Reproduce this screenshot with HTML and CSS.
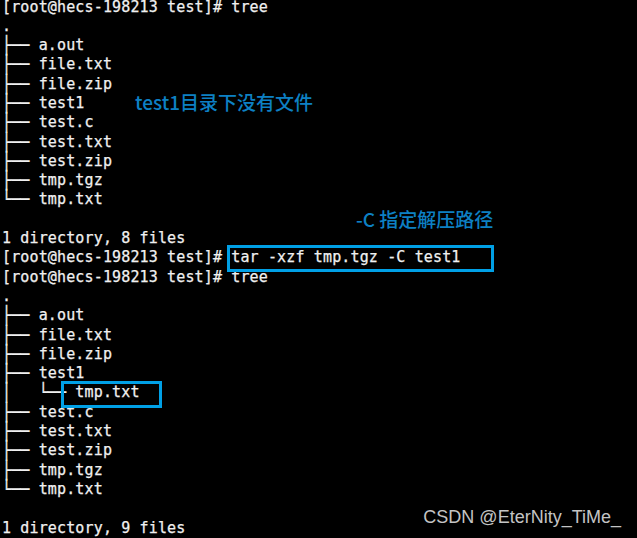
FILE: index.html
```html
<!DOCTYPE html>
<html lang="zh">
<head>
<meta charset="utf-8">
<link rel="stylesheet" href="styles.css">
</head>
<body>
<div class="screen">
<pre class="term">[root@hecs-198213 test]# tree
.
<span class="tr">├──</span> a.out
<span class="tr">├──</span> file.txt
<span class="tr">├──</span> file.zip
<span class="tr">├──</span> test1
<span class="tr">├──</span> test.c
<span class="tr">├──</span> test.txt
<span class="tr">├──</span> test.zip
<span class="tr">├──</span> tmp.tgz
<span class="tr">└──</span> tmp.txt

1 directory, 8 files
[root@hecs-198213 test]# tar -xzf tmp.tgz -C test1
[root@hecs-198213 test]# tree
.
<span class="tr">├──</span> a.out
<span class="tr">├──</span> file.txt
<span class="tr">├──</span> file.zip
<span class="tr">├──</span> test1
<span class="tr">│   └──</span> tmp.txt
<span class="tr">├──</span> test.c
<span class="tr">├──</span> test.txt
<span class="tr">├──</span> test.zip
<span class="tr">├──</span> tmp.tgz
<span class="tr">└──</span> tmp.txt

1 directory, 9 files</pre>
<div class="note note-empty">test1目录下没有文件</div>
<div class="note note-path">-C 指定解压路径</div>
<div class="mark mark-cmd"></div>
<div class="mark mark-file"></div>
<div class="watermark">CSDN @EterNity_TiMe_</div>
</div>
</body>
</html>
```

FILE: styles.css
```css
html, body {
  margin: 0;
  padding: 0;
  background: #000;
}

.screen {
  position: relative;
  width: 637px;
  height: 538px;
  overflow: hidden;
  background: #000;
}

.term {
  margin: -2.5px 0 0 0;
  padding: 0 0 0 2px;
  font-family: "DejaVu Sans Mono", monospace;
  font-size: 15px;
  letter-spacing: 0.14px;
  line-height: 19.3px;
  color: #f0f0f0;
  -webkit-text-stroke: 0.25px #f0f0f0;
}

.tr {
  display: inline-block;
  transform: scaleY(1.16);
}

.note {
  position: absolute;
  font-family: "Noto Sans CJK SC", sans-serif;
  font-size: 19px;
  font-weight: 500;
  line-height: 19px;
  color: #0d80c4;
  white-space: nowrap;
}

.note-empty {
  left: 135px;
  top: 92px;
}

.note-path {
  left: 356px;
  top: 209px;
}

.mark {
  position: absolute;
  box-sizing: border-box;
  border: 3px solid #00a0e6;
}

.mark-cmd {
  left: 227px;
  top: 245px;
  width: 267px;
  height: 27px;
}

.mark-file {
  left: 61px;
  top: 381px;
  width: 101px;
  height: 27px;
}

.watermark {
  position: absolute;
  right: 16px;
  top: 506px;
  font-family: "Liberation Sans", Arial, sans-serif;
  font-size: 18px;
  line-height: 22px;
  color: #c4c4c4;
  white-space: nowrap;
}
```
